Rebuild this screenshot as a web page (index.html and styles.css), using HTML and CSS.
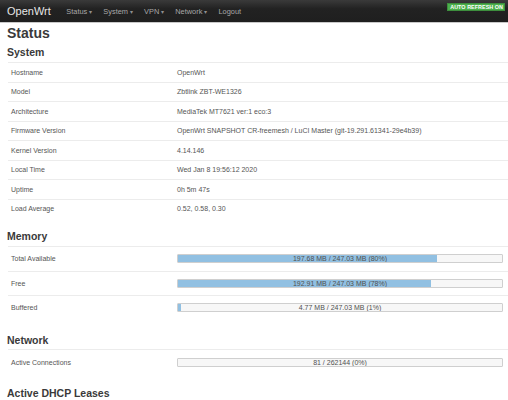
FILE: index.html
```html
<!DOCTYPE html>
<html>
<head>
<meta charset="utf-8">
<link rel="stylesheet" href="styles.css">
</head>
<body>
<header class="topbar">
  <a class="brand">OpenWrt</a>
  <nav class="menu">
    <a class="menu-item">Status <span class="caret">▾</span></a>
    <a class="menu-item">System <span class="caret">▾</span></a>
    <a class="menu-item">VPN <span class="caret">▾</span></a>
    <a class="menu-item">Network <span class="caret">▾</span></a>
    <a class="menu-item">Logout</a>
  </nav>
  <span class="badge">AUTO REFRESH ON</span>
</header>
<main class="content">
  <h2 class="page-title">Status</h2>

  <h3 class="section-title first">System</h3>
  <div class="table">
    <div class="row"><div class="label">Hostname</div><div class="value">OpenWrt</div></div>
    <div class="row"><div class="label">Model</div><div class="value">Zbtlink ZBT-WE1326</div></div>
    <div class="row"><div class="label">Architecture</div><div class="value">MediaTek MT7621 ver:1 eco:3</div></div>
    <div class="row"><div class="label">Firmware Version</div><div class="value">OpenWrt SNAPSHOT CR-freemesh / LuCI Master (git-19.291.61341-29e4b39)</div></div>
    <div class="row"><div class="label">Kernel Version</div><div class="value">4.14.146</div></div>
    <div class="row"><div class="label">Local Time</div><div class="value">Wed Jan 8 19:56:12 2020</div></div>
    <div class="row"><div class="label">Uptime</div><div class="value">0h 5m 47s</div></div>
    <div class="row"><div class="label">Load Average</div><div class="value">0.52, 0.58, 0.30</div></div>
  </div>

  <h3 class="section-title memory">Memory</h3>
  <div class="table">
    <div class="row tall"><div class="label">Total Available</div><div class="value"><div class="bar"><div class="fill" style="width:80%"></div><span class="bar-text">197.68 MB / 247.03 MB (80%)</span></div></div></div>
    <div class="row tall"><div class="label">Free</div><div class="value"><div class="bar"><div class="fill" style="width:78%"></div><span class="bar-text">192.91 MB / 247.03 MB (78%)</span></div></div></div>
    <div class="row tall"><div class="label">Buffered</div><div class="value"><div class="bar"><div class="fill" style="width:1%"></div><span class="bar-text">4.77 MB / 247.03 MB (1%)</span></div></div></div>
  </div>

  <h3 class="section-title network">Network</h3>
  <div class="table">
    <div class="row net"><div class="label">Active Connections</div><div class="value"><div class="bar"><div class="fill" style="width:0%"></div><span class="bar-text">81 / 262144 (0%)</span></div></div></div>
  </div>

  <h3 class="section-title dhcp">Active DHCP Leases</h3>
</main>
</body>
</html>
```

FILE: styles.css
```css
html, body {
  margin: 0;
  padding: 0;
  background: #fff;
  font-family: "Liberation Sans", Arial, sans-serif;
  color: #404040;
  overflow: hidden;
}

.topbar {
  height: 22px;
  background: linear-gradient(#3a3a3a, #222 40%, #1f1f1f);
  border-bottom: 1px solid #c9c9c9;
  display: flex;
  align-items: center;
  padding: 0 3px 0 7px;
  box-sizing: content-box;
}

.brand {
  color: #e6e6e6;
  font-size: 11px;
  margin-right: 10px;
}

.menu {
  display: flex;
  align-items: center;
  flex: 1;
}

.menu-item {
  color: #a8a8a8;
  font-size: 7.4px;
  padding: 0 5.5px;
}

.caret {
  font-size: 6px;
  color: #909090;
}

.badge {
  background: #4cb04c;
  border: 1px solid #3d8e3d;
  color: #fff;
  font-size: 5.4px;
  font-weight: bold;
  line-height: 6px;
  padding: 0 1px 0 2px;
  margin-top: -8px;
  letter-spacing: 0.05px;
}

.content {
  padding: 0 0 0 7px;
}

.page-title {
  margin: 0;
  font-size: 14px;
  line-height: 20px;
  font-weight: bold;
  color: #3a3a3a;
}

.section-title {
  margin: 0;
  font-size: 10.5px;
  line-height: 14px;
  font-weight: bold;
  color: #3a3a3a;
}

.section-title.first { margin-top: 2px; margin-bottom: 3px; }
.section-title.memory { margin-top: 11px; margin-bottom: 3px; }
.section-title.network { margin-top: 13.5px; margin-bottom: 2px; }
.section-title.dhcp { margin-top: 11px; }

.table {
  margin-left: 1px;
}

.row {
  display: grid;
  grid-template-columns: 169px 1fr;
  height: 19.5px;
  align-items: center;
  border-top: 1px solid #ececec;
  box-sizing: border-box;
  font-size: 7px;
  color: #555;
}

.row.tall { height: 24.5px; }
.row.net { height: 26px; }

.label {
  padding-left: 3px;
}

.value {
  padding-right: 5px;
}

.bar {
  position: relative;
  height: 9px;
  border: 1px solid #cfcfcf;
  border-radius: 1px;
  background: #f7f7f7;
  box-sizing: border-box;
  overflow: hidden;
}

.fill {
  height: 100%;
  background: #91c0e2;
}

.bar-text {
  position: absolute;
  left: 0;
  right: 0;
  top: 0;
  line-height: 7px;
  text-align: center;
  font-size: 7px;
  color: #505050;
}
```
